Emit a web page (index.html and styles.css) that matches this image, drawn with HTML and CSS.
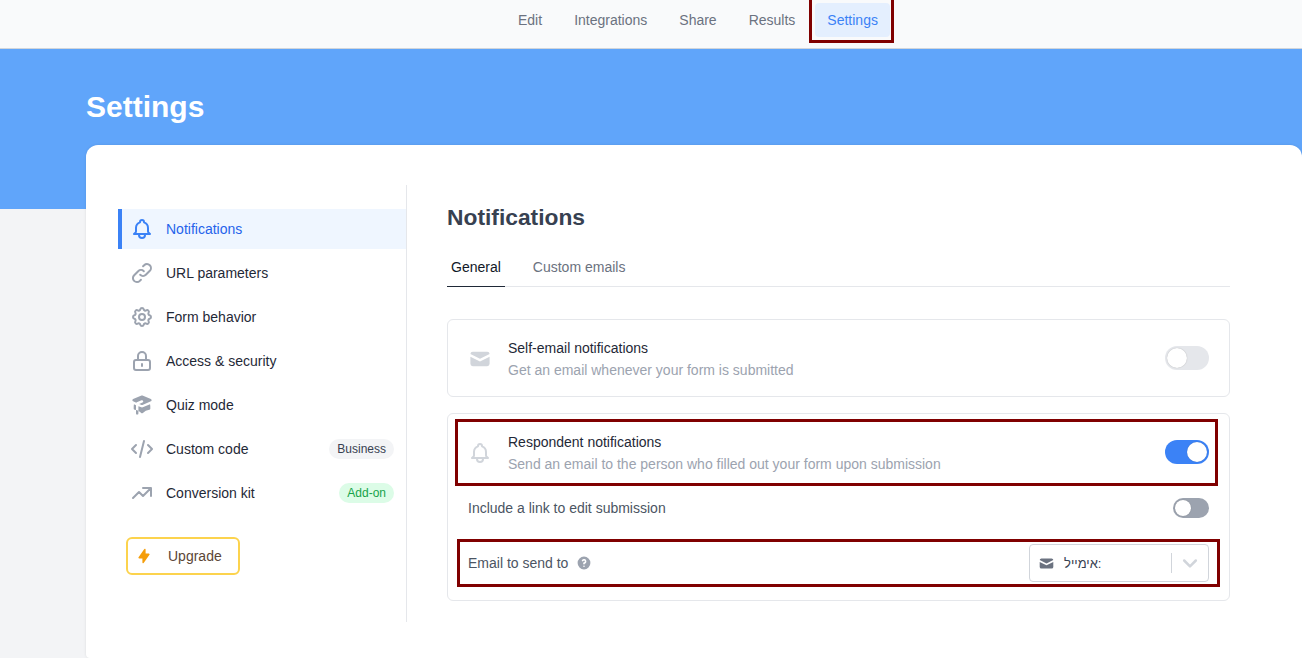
FILE: index.html
```html
<!DOCTYPE html>
<html lang="en">
<head>
    <meta charset="UTF-8">
    <meta name="viewport" content="width=device-width, initial-scale=1.0">
    <title>Settings</title>
    <link rel="stylesheet" href="styles.css">
</head>
<body>
    <nav class="top-nav">
        <a class="nav-item">Edit</a>
        <a class="nav-item">Integrations</a>
        <a class="nav-item">Share</a>
        <a class="nav-item">Results</a>
        <a class="nav-item active">Settings</a>
    </nav>

    <header class="hero">
        <h1>Settings</h1>
    </header>

    <div class="panel">
        <aside class="sidebar">
            <a class="side-item active">
                <svg class="side-icon" viewBox="0 0 24 24"><path d="M15 17h5l-1.405-1.405A2.032 2.032 0 0118 14.158V11a6.002 6.002 0 00-4-5.659V5a2 2 0 10-4 0v.341C7.67 6.165 6 8.388 6 11v3.159c0 .538-.214 1.055-.595 1.436L4 17h5m6 0v1a3 3 0 11-6 0v-1m6 0H9"/></svg>
                <span>Notifications</span>
            </a>
            <a class="side-item">
                <svg class="side-icon" viewBox="0 0 24 24"><path d="M13.828 10.172a4 4 0 00-5.656 0l-4 4a4 4 0 105.656 5.656l1.102-1.101m-.758-4.899a4 4 0 005.656 0l4-4a4 4 0 00-5.656-5.656l-1.1 1.1"/></svg>
                <span>URL parameters</span>
            </a>
            <a class="side-item">
                <svg class="side-icon" viewBox="0 0 24 24"><path d="M10.325 4.317c.426-1.756 2.924-1.756 3.35 0a1.724 1.724 0 002.573 1.066c1.543-.94 3.31.826 2.37 2.37a1.724 1.724 0 001.065 2.572c1.756.426 1.756 2.924 0 3.35a1.724 1.724 0 00-1.066 2.573c.94 1.543-.826 3.31-2.37 2.37a1.724 1.724 0 00-2.572 1.065c-.426 1.756-2.924 1.756-3.35 0a1.724 1.724 0 00-2.573-1.066c-1.543.94-3.31-.826-2.37-2.37a1.724 1.724 0 00-1.065-2.572c-1.756-.426-1.756-2.924 0-3.35a1.724 1.724 0 001.066-2.573c-.94-1.543.826-3.31 2.37-2.37.996.608 2.296.07 2.572-1.065z"/><circle cx="12" cy="12" r="3"/></svg>
                <span>Form behavior</span>
            </a>
            <a class="side-item">
                <svg class="side-icon" viewBox="0 0 24 24"><path d="M12 15v2m-6 4h12a2 2 0 002-2v-6a2 2 0 00-2-2H6a2 2 0 00-2 2v6a2 2 0 002 2zm10-10V7a4 4 0 00-8 0v4h8z"/></svg>
                <span>Access &amp; security</span>
            </a>
            <a class="side-item">
                <svg class="side-icon solid" viewBox="0 0 20 20"><path d="M10.394 2.08a1 1 0 00-.788 0l-7 3a1 1 0 000 1.84L5.25 8.051a.999.999 0 01.356-.257l4-1.714a1 1 0 11.788 1.838L7.667 9.088l1.94.831a1 1 0 00.787 0l7-3a1 1 0 000-1.838l-7-3zM3.31 9.397L5 10.12v4.102a8.969 8.969 0 00-1.05-.174 1 1 0 01-.89-.89 11.115 11.115 0 01.25-3.762zM9.3 16.573A9.026 9.026 0 007 14.935v-3.957l1.818.78a3 3 0 002.364 0l5.508-2.361a11.026 11.026 0 01.25 3.762 1 1 0 01-.89.89 8.968 8.968 0 00-5.35 2.524 1 1 0 01-1.4 0zM6 18a1 1 0 001-1v-2.065a8.935 8.935 0 00-2-.712V17a1 1 0 001 1z"/></svg>
                <span>Quiz mode</span>
            </a>
            <a class="side-item">
                <svg class="side-icon" viewBox="0 0 24 24"><path d="M10 20l4-16m4 4l4 4-4 4M6 16l-4-4 4-4"/></svg>
                <span>Custom code</span>
                <span class="badge">Business</span>
            </a>
            <a class="side-item">
                <svg class="side-icon" viewBox="0 0 24 24"><path d="M13 7h8m0 0v8m0-8l-8 8-4-4-6 6"/></svg>
                <span>Conversion kit</span>
                <span class="badge green">Add-on</span>
            </a>

            <button class="upgrade-btn">
                <svg class="bolt" viewBox="0 0 20 20"><path d="M11.3 1.046A1 1 0 0112 2v5h4a1 1 0 01.82 1.573l-7 10A1 1 0 018 18v-5H4a1 1 0 01-.82-1.573l7-10a1 1 0 011.12-.38z"/></svg>
                Upgrade
            </button>
        </aside>

        <main class="content">
            <h2>Notifications</h2>

            <div class="tabs">
                <a class="tab active">General</a>
                <a class="tab">Custom emails</a>
            </div>

            <section class="box">
                <div class="box-row">
                    <svg class="row-icon solid" viewBox="0 0 20 20"><path d="M2.003 5.884L10 9.882l7.997-3.998A2 2 0 0016 4H4a2 2 0 00-1.997 1.884z"/><path d="M18 8.118l-8 4-8-4V14a2 2 0 002 2h12a2 2 0 002-2V8.118z"/></svg>
                    <div class="row-text">
                        <p class="row-title">Self-email notifications</p>
                        <p class="row-sub">Get an email whenever your form is submitted</p>
                    </div>
                    <span class="toggle off"><span class="knob"></span></span>
                </div>
            </section>

            <section class="box second">
                <div class="box-row marked-respondent">
                    <svg class="row-icon" viewBox="0 0 24 24"><path d="M15 17h5l-1.405-1.405A2.032 2.032 0 0118 14.158V11a6.002 6.002 0 00-4-5.659V5a2 2 0 10-4 0v.341C7.67 6.165 6 8.388 6 11v3.159c0 .538-.214 1.055-.595 1.436L4 17h5m6 0v1a3 3 0 11-6 0v-1m6 0H9"/></svg>
                    <div class="row-text">
                        <p class="row-title">Respondent notifications</p>
                        <p class="row-sub">Send an email to the person who filled out your form upon submission</p>
                    </div>
                    <span class="toggle on"><span class="knob"></span></span>
                </div>

                <div class="option-row">
                    <span class="option-label">Include a link to edit submission</span>
                    <span class="toggle small"><span class="knob"></span></span>
                </div>

                <div class="option-row email-row">
                    <span class="option-label">Email to send to</span>
                    <svg class="help-icon" viewBox="0 0 20 20"><path fill-rule="evenodd" d="M18 10a8 8 0 11-16 0 8 8 0 0116 0zm-8-3a1 1 0 00-.867.5 1 1 0 11-1.731-1A3 3 0 0113 8a3.001 3.001 0 01-2 2.83V11a1 1 0 11-2 0v-1a1 1 0 011-1 1 1 0 100-2zm0 8a1 1 0 100-2 1 1 0 000 2z"/></svg>
                    <div class="select">
                        <svg class="select-icon" viewBox="0 0 20 20"><path d="M2.003 5.884L10 9.882l7.997-3.998A2 2 0 0016 4H4a2 2 0 00-1.997 1.884z"/><path d="M18 8.118l-8 4-8-4V14a2 2 0 002 2h12a2 2 0 002-2V8.118z"/></svg>
                        <span class="select-value">אימייל:</span>
                        <span class="select-sep"></span>
                        <svg class="chevron" viewBox="0 0 24 24"><path d="M19 9l-7 7-7-7"/></svg>
                    </div>
                </div>
            </section>
        </main>
    </div>
</body>
</html>
```

FILE: styles.css
```css
*, *::before, *::after{
    margin: 0;
    padding: 0;
    box-sizing: border-box;
    font-family: "Liberation Sans", Arial, sans-serif;
}

html, body{
    height: 100%;
    overflow: hidden;
}
body{
    background-color: #f3f4f6;
    color: #111827;
    font-size: 14px;
}

/* top navigation */
.top-nav{
    display: flex;
    gap: 8px;
    height: 49px;
    padding: 3px 0 0 506px;
    background-color: #f9fafb;
    border-bottom: 1px solid #d1d5db;
}
.nav-item{
    position: relative;
    height: 34px;
    padding: 0 12px;
    line-height: 34px;
    border-radius: 4px;
    color: #6b7280;
}
.nav-item.active{
    background-color: #e4effe;
    color: #3b82f6;
}
.nav-item.active::after{
    content: "";
    position: absolute;
    top: -6px;
    left: -6px;
    right: -4px;
    bottom: -6px;
    border: 3px solid #800000;
}

/* blue header */
.hero{
    height: 160px;
    padding: 40px 86px 0;
    background-color: #60a5fa;
}
.hero h1{
    font-size: 30px;
    line-height: 36px;
    color: #fff;
}

.panel{
    display: flex;
    height: 513px;
    margin: -64px 0 0 86px;
    padding: 40px 72px 0 32px;
    background-color: #fff;
    border-radius: 12px 12px 0 4px;
    box-shadow: 0 0 3px rgba(0, 0, 0, 0.1);
}

/* left menu */
.sidebar{
    flex: none;
    width: 289px;
    height: 437px;
    padding-top: 24px;
    border-right: 1px solid #e5e7eb;
}
.side-item{
    display: flex;
    align-items: center;
    height: 40px;
    margin-bottom: 4px;
    padding: 0 12px;
    color: #1f2937;
}
.side-item.active{
    padding-left: 8px;
    background-color: #eff6ff;
    border-left: 4px solid #3b82f6;
    color: #2563eb;
}
.side-icon{
    flex: none;
    width: 24px;
    height: 24px;
    margin-right: 12px;
    fill: none;
    stroke: #9ca3af;
    stroke-width: 2;
    stroke-linecap: round;
    stroke-linejoin: round;
}
.side-icon.solid{
    fill: #9ca3af;
    stroke: none;
}
.side-item.active .side-icon{
    stroke: #3b82f6;
}
.badge{
    margin-left: auto;
    height: 20px;
    padding: 0 8px;
    line-height: 20px;
    font-size: 12px;
    color: #374151;
    background-color: #f3f4f6;
    border-radius: 10px;
}
.badge.green{
    color: #16a34a;
    background-color: #dcfce7;
}
.upgrade-btn{
    display: flex;
    align-items: center;
    width: 114px;
    height: 38px;
    margin: 24px 0 0 8px;
    padding-left: 8px;
    background-color: #fff;
    border: 2px solid #fcd34d;
    border-radius: 6px;
    font-size: 14px;
    color: #5b4636;
}
.bolt{
    width: 16px;
    height: 16px;
    margin-right: 16px;
    fill: #f59e0b;
}

/* right side */
.content{
    flex: 1;
    margin-left: 40px;
    padding-top: 16px;
}
.content h2{
    font-size: 22.8px;
    line-height: 32px;
    color: #374151;
}
.tabs{
    display: flex;
    gap: 24px;
    height: 38px;
    margin-top: 16px;
    border-bottom: 1px solid #e5e7eb;
}
.tab{
    height: 38px;
    padding: 0 4px;
    line-height: 36px;
    color: #6b7280;
}
.tab.active{
    color: #111827;
    border-bottom: 1px solid #1f2937;
}

.box{
    margin-top: 32px;
    padding: 18px 20px 16px;
    border: 1px solid #e5e7eb;
    border-radius: 6px;
}
.box.second{
    margin-top: 16px;
    padding-bottom: 18px;
}
.box-row{
    position: relative;
    display: flex;
    align-items: center;
}
.box-row .toggle{
    margin-bottom: 2px;
}
.marked-respondent::after{
    content: "";
    position: absolute;
    top: -13px;
    left: -13px;
    right: -9px;
    bottom: -12px;
    border: 3px solid #800000;
}
.row-icon{
    flex: none;
    width: 24px;
    height: 24px;
    margin-right: 16px;
    fill: none;
    stroke: #d1d5db;
    stroke-width: 2;
    stroke-linecap: round;
    stroke-linejoin: round;
}
.row-icon.solid{
    fill: #d1d5db;
    stroke: none;
}
.row-text{
    flex: 1;
}
.row-title{
    line-height: 20px;
    color: #1f2937;
}
.row-sub{
    margin-top: 2px;
    line-height: 20px;
    color: #9ca3af;
}

.toggle{
    display: flex;
    align-items: center;
    flex: none;
    width: 44px;
    height: 24px;
    padding: 2px;
    border-radius: 12px;
    background-color: #e5e7eb;
}
.knob{
    width: 20px;
    height: 20px;
    background-color: #fff;
    border-radius: 50%;
    box-shadow: 0 0 1px rgba(0, 0, 0, 0.3);
}
.toggle.on{
    justify-content: flex-end;
    background-color: #3b82f6;
}
.toggle.small{
    width: 36px;
    height: 20px;
    background-color: #9ca3af;
}
.toggle.small .knob{
    width: 16px;
    height: 16px;
}

.option-row{
    position: relative;
    display: flex;
    align-items: center;
    justify-content: space-between;
    margin-top: 24px;
}
.option-label{
    color: #4b5563;
}
.email-row{
    justify-content: flex-start;
    margin-top: 26px;
}
.email-row::after{
    content: "";
    position: absolute;
    top: -5px;
    left: -11px;
    right: -11px;
    bottom: -5px;
    border: 3px solid #800000;
}
.help-icon{
    width: 16px;
    height: 16px;
    margin-left: 8px;
    fill: #9ca3af;
}
.select{
    display: flex;
    align-items: center;
    width: 180px;
    height: 38px;
    margin-left: auto;
    padding: 0 8px;
    border: 1px solid #d1d5db;
    border-radius: 4px;
}
.select-icon{
    flex: none;
    width: 17px;
    height: 17px;
    fill: #6b7280;
}
.select-value{
    flex: 1;
    margin-left: 9px;
    font-size: 13px;
    color: #374151;
}
.select-sep{
    width: 1px;
    height: 20px;
    background-color: #d1d5db;
}
.chevron{
    width: 20px;
    height: 20px;
    margin-left: 8px;
    fill: none;
    stroke: #d1d5db;
    stroke-width: 3;
    stroke-linecap: round;
    stroke-linejoin: round;
}
```
